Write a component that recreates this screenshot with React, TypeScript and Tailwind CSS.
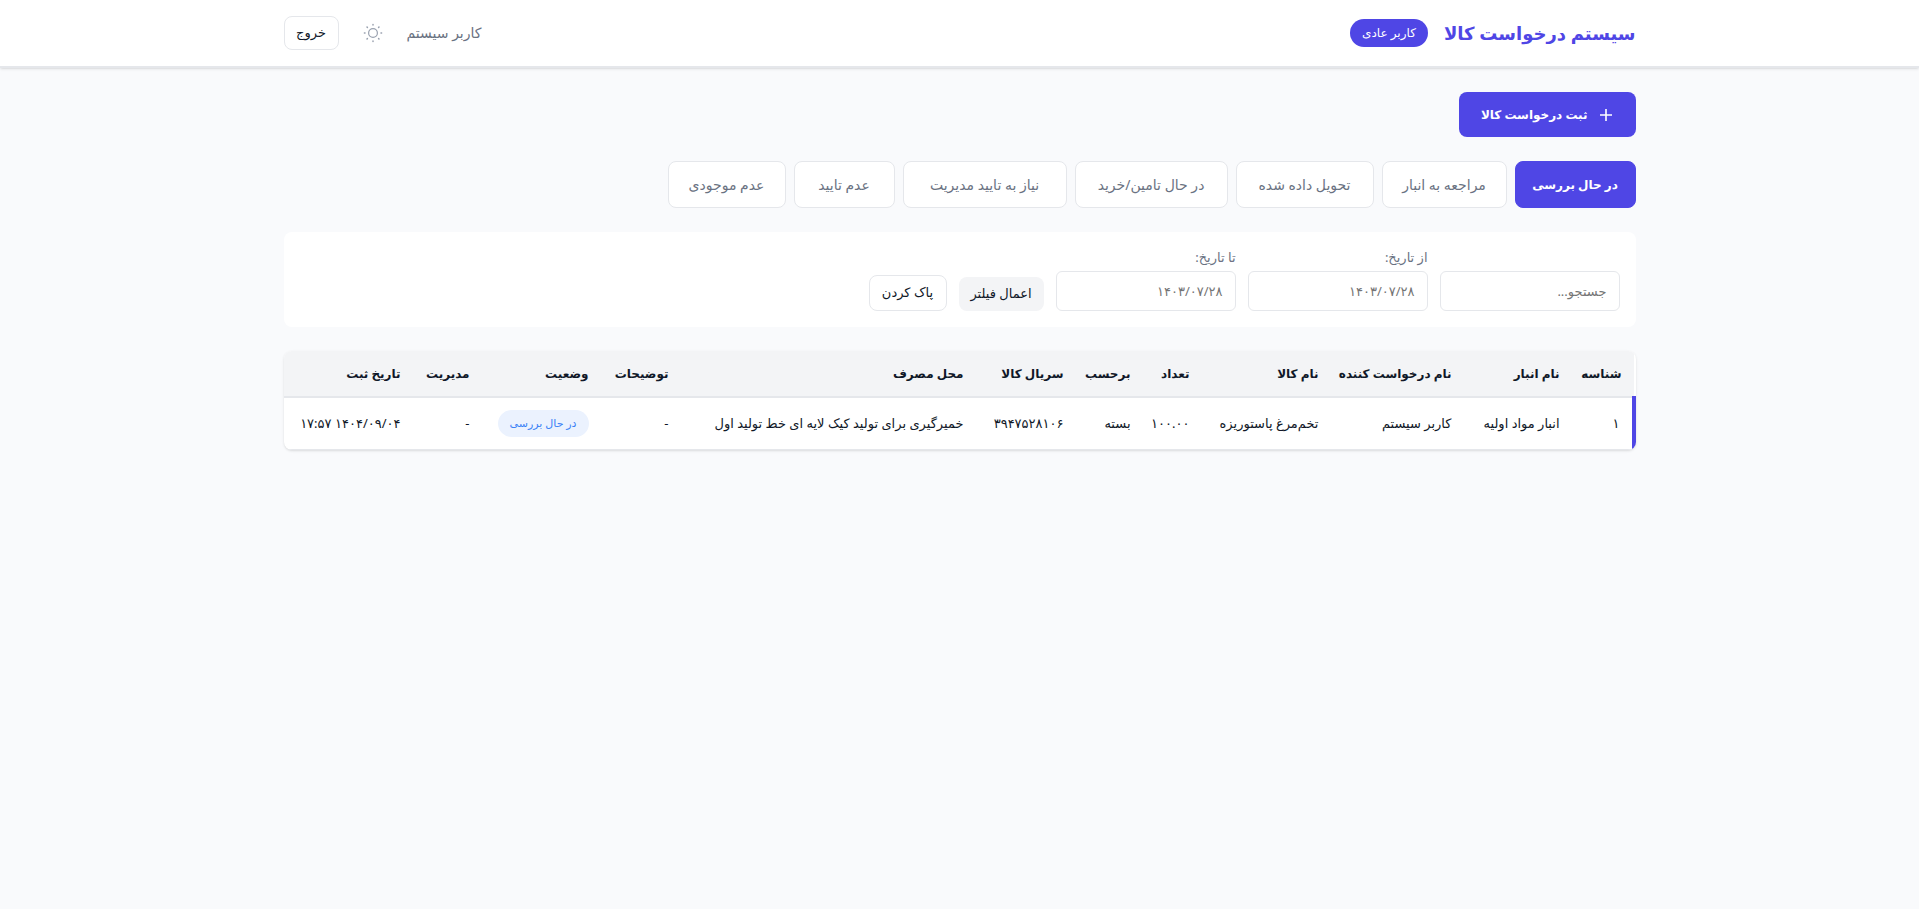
import React, { useState } from 'react';

interface Column {
  title: string;
  width: string;
}

const tabs = [
  { label: 'در حال بررسی', width: 'w-[121px]' },
  { label: 'مراجعه به انبار', width: 'w-[125px]' },
  { label: 'تحویل داده شده', width: 'w-[138px]' },
  { label: 'در حال تامین/خرید', width: 'w-[153px]' },
  { label: 'نیاز به تایید مدیریت', width: 'w-[164px]' },
  { label: 'عدم تایید', width: 'w-[101px]' },
  { label: 'عدم موجودی', width: 'w-[118px]' },
];

const columns: Column[] = [
  { title: 'شناسه', width: 'w-[62px]' },
  { title: 'نام انبار', width: 'w-[108px]' },
  { title: 'نام درخواست کننده', width: 'w-[133px]' },
  { title: 'نام کالا', width: 'w-[129px]' },
  { title: 'تعداد', width: 'w-[59px]' },
  { title: 'برحسب', width: 'w-[67px]' },
  { title: 'سریال کالا', width: 'w-[100px]' },
  { title: 'محل مصرف', width: 'w-[295px]' },
  { title: 'توضیحات', width: 'w-[80px]' },
  { title: 'وضعیت', width: 'w-[119px]' },
  { title: 'مدیریت', width: 'w-[69px]' },
  { title: 'تاریخ ثبت', width: 'w-auto' },
];

const row = [
  '۱',
  'انبار مواد اولیه',
  'کاربر سیستم',
  'تخم‌مرغ پاستوریزه',
  '۱۰۰.۰۰',
  'بسته',
  '۳۹۴۷۵۲۸۱۰۶',
  'خمیرگیری برای تولید کیک لایه ای خط تولید اول',
  '-',
  'در حال بررسی',
  '-',
  '۱۴۰۴/۰۹/۰۴ ۱۷:۵۷',
];

const STATUS_COLUMN = 9;

const SunIcon = () => (
  <svg className="size-5" viewBox="0 0 20 20" fill="none" stroke="currentColor" strokeLinecap="round">
    <circle cx="10" cy="10" r="4.4" strokeWidth="1.2" />
    <path
      d="M10 1.4v.6M10 18v.6M1.4 10h.6M18 10h.6M4 4l.4.4M15.6 15.6l.4.4M4 16l.4-.4M15.6 4.4l.4-.4"
      strokeWidth="1.5"
    />
  </svg>
);

const PlusIcon = () => (
  <svg className="size-5" viewBox="0 0 20 20" fill="none" stroke="currentColor" strokeWidth="1.6">
    <path d="M10 4v12M4 10h12" />
  </svg>
);

const Header: React.FC = () => (
  <header className="bg-white border-b-2 border-gray-200 shadow-sm">
    <div className="max-w-[1400px] mx-auto px-6 py-4 flex items-center justify-between">
      <div className="flex items-center gap-4">
        <h1 className="text-lg font-bold text-[#4f46e5]">سیستم درخواست کالا</h1>
        <span className="h-7 px-3 flex items-center rounded-full bg-[#4f46e5] text-white text-xs font-medium">
          کاربر عادی
        </span>
      </div>
      <div className="flex items-center gap-4">
        <span className="text-sm text-gray-500">کاربر سیستم</span>
        <button className="px-2 text-gray-400" aria-label="تغییر پوسته">
          <SunIcon />
        </button>
        <button className="w-[55px] h-[34px] rounded-lg border border-gray-200 bg-white text-[13px] text-gray-900">
          خروج
        </button>
      </div>
    </div>
  </header>
);

const inputClass =
  'w-[180px] h-10 px-3 rounded-md border border-gray-200 bg-white text-[13px] text-gray-900 placeholder:text-[#757575]';

const Filters: React.FC = () => (
  <form className="mt-6 bg-white rounded-lg p-4 flex flex-wrap items-end gap-3">
    <input className={inputClass} type="text" placeholder="جستجو..." aria-label="جستجو" />
    <div className="flex flex-col gap-1">
      <label className="text-[13px] leading-[19px] text-gray-500" htmlFor="from-date">از تاریخ:</label>
      <input id="from-date" className={inputClass} type="text" placeholder="۱۴۰۳/۰۷/۲۸" />
    </div>
    <div className="flex flex-col gap-1">
      <label className="text-[13px] leading-[19px] text-gray-500" htmlFor="to-date">تا تاریخ:</label>
      <input id="to-date" className={inputClass} type="text" placeholder="۱۴۰۳/۰۷/۲۸" />
    </div>
    <button type="button" className="w-[85px] h-[34px] rounded-lg bg-gray-100 text-[13px] text-gray-900">
      اعمال فیلتر
    </button>
    <button type="reset" className="w-[78px] h-9 rounded-lg border border-gray-200 bg-white text-[13px] text-gray-900">
      پاک کردن
    </button>
  </form>
);

const RequestsTable: React.FC = () => (
  <div className="mt-6 bg-white rounded-lg overflow-hidden shadow">
    <table className="w-full table-fixed border-collapse text-right whitespace-nowrap text-gray-900">
      <thead>
        <tr className="h-[46px] bg-gray-100 border-b-2 border-gray-200">
          {columns.map((column) => (
            <th key={column.title} className={`${column.width} px-3 text-xs font-bold`}>
              {column.title}
            </th>
          ))}
        </tr>
      </thead>
      <tbody>
        <tr className="h-[52px] border-b border-b-gray-200 border-r-4 border-r-[#4f46e5]">
          {row.map((value, index) => (
            <td key={columns[index].title} className="px-3 text-[13px]">
              {index === STATUS_COLUMN ? (
                <span className="inline-flex h-[27px] px-3 items-center rounded-full bg-[#ebf2fe] text-[11px] text-[#3b82f6]">
                  {value}
                </span>
              ) : (
                value
              )}
            </td>
          ))}
        </tr>
      </tbody>
    </table>
  </div>
);

export default function App() {
  const [activeTab, setActiveTab] = useState(0);

  return (
    <div dir="rtl" className="min-h-screen bg-[#f9fafc] font-['Noto_Sans','DejaVu_Sans',sans-serif]">
      <Header />
      <main className="max-w-[1400px] mx-auto p-6">
        <button className="w-[177px] h-[45px] px-5 flex items-center gap-2 rounded-lg bg-[#4f46e5] text-white text-xs font-semibold">
          <PlusIcon />
          ثبت درخواست کالا
        </button>

        <nav className="mt-6 flex flex-wrap gap-2">
          {tabs.map((tab, index) => (
            <button
              key={tab.label}
              onClick={() => setActiveTab(index)}
              className={`${tab.width} h-[47px] rounded-lg border whitespace-nowrap ${
                index === activeTab
                  ? 'bg-[#4f46e5] border-[#4f46e5] text-white text-xs font-semibold'
                  : 'bg-white border-gray-200 text-gray-500 text-sm'
              }`}
            >
              {tab.label}
            </button>
          ))}
        </nav>

        <Filters />
        <RequestsTable />
      </main>
    </div>
  );
}
